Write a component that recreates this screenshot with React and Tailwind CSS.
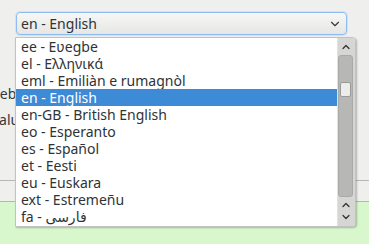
import { ChevronDown, ChevronUp } from "lucide-react"

const langs = [
    "ee - Eʋegbe",
    "el - Ελληνικά",
    "eml - Emiliàn e rumagnòl",
    "en - English",
    "en-GB - British English",
    "eo - Esperanto",
    "es - Español",
    "et - Eesti",
    "eu - Euskara",
    "ext - Estremeñu",
    "fa - فارسی",
]

export default function App() {
    return (
        <div className="relative w-[369px] h-[244px] overflow-hidden bg-[#efefee] text-[#2e3436] font-['Noto_Sans','DejaVu_Sans',sans-serif] text-[14px]">
            {/* page behind the popup */}
            <div className="flex flex-col">
                <div className="flex items-center pt-[12px] pl-[16px]">
                    <div className="flex items-center justify-between w-[331px] h-[23px] rounded-[4px] border border-[#8cbcf2] bg-gradient-to-b from-[#f7f7f6] to-[#e6e6e4] pl-[4px] pr-[4px] shadow-[0_0_0_1px_#cfe3fa]">
                        <span className="leading-none">en - English</span>
                        <ChevronDown size={14} strokeWidth={2} className="text-[#3a3a3a]" />
                    </div>
                </div>
                <div className="h-[50px]" />
                <div className="h-[17px] leading-[17px] -ml-[13px] whitespace-nowrap text-[#33393b]">Web</div>
                <div className="h-[9px]" />
                <div className="h-[17px] leading-[17px] -ml-[9px] whitespace-nowrap text-[#33393b]">Value</div>
                <div className="h-[52px]" />
                <div className="h-[1px] bg-[#b6b6b4]" />
                <div className="h-[20px]" />
                <div className="h-[1px] bg-[#a9c0a0]" />
                <div className="h-[60px] bg-[#d9f7cc]" />
            </div>

            {/* popup list */}
            <div className="absolute left-[15px] top-[37px] w-[341px] h-[190px] flex bg-white border border-[#c2c2c0] rounded-br-[4px] rounded-tr-[4px] shadow-[1px_1px_2px_rgba(0,0,0,0.25)]">
                <div className="flex-1 flex flex-col">
                    {langs.map((l) => (
                        <div
                            key={l}
                            className={"h-[17px] leading-[17px] pl-[5px] whitespace-nowrap " + (l === "en - English" ? "bg-[#3d8ad6] text-white" : "text-[#2e3436]")}
                        >
                            {l}
                        </div>
                    ))}
                </div>
                <div className="w-[18px] flex flex-col items-center bg-[#d6d6d4] border-l border-[#e2e2e0] pr-[2px]">
                    <div className="h-[17px] flex items-center justify-center">
                        <ChevronUp size={12} strokeWidth={2.5} className="text-[#333]" />
                    </div>
                    <div className="relative w-[15px] h-[142px] rounded-[3px] bg-[#b7b7b5] border border-[#a9a9a7]">
                        <div className="absolute left-[1px] top-[26px] w-[11px] h-[15px] rounded-[2px] bg-[#ececeb] border border-[#9a9a98]" />
                    </div>
                    <div className="h-[14px] flex items-end justify-center">
                        <ChevronUp size={12} strokeWidth={2.5} className="text-[#333]" />
                    </div>
                    <div className="h-[12px] flex items-center justify-center">
                        <ChevronDown size={12} strokeWidth={2.5} className="text-[#333]" />
                    </div>
                </div>
            </div>
        </div>
    )
}
